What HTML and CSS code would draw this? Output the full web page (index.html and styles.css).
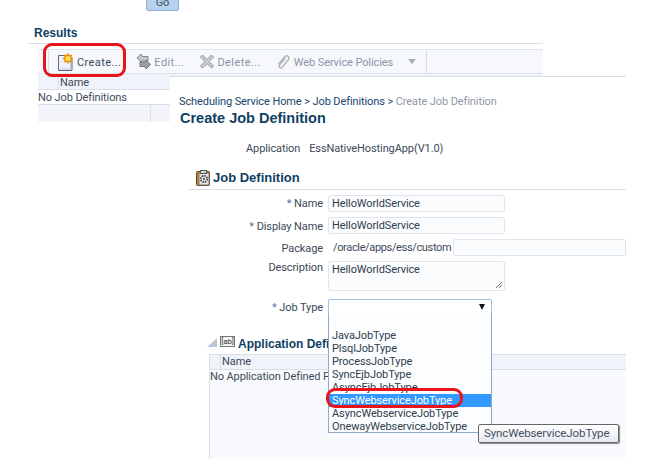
FILE: index.html
```html
<!DOCTYPE html>
<html lang="en">
<head>
    <meta charset="UTF-8">
    <title>Create Job Definition</title>
    <link rel="stylesheet" href="styles.css">
</head>
<body>
    <div class="gorow"><div class="gobtn">Go</div></div>

    <div class="results">
        <h2 class="results-title">Results</h2>
        <div class="toolbar">
            <div class="tool tool-create">
                <svg class="ico" width="16" height="18" viewBox="0 0 16 18">
                    <path d="M.5 2.500h9l4.500 4v11H.5z" fill="#f0f1f9" stroke="#5b6690"/>
                    <path d="M2 16h10.500V8" fill="none" stroke="#c3c8de"/>
                    <path d="M10 0l1.500 2 2.500-.5-.5 2.500 2 1.500-2 1.500.5 2.500-2.500-.5L10 11 8.500 9 6 9.500 6.500 7l-2-1.500L6.500 4 6 1.500l2.500.5z" fill="#f08a12"/>
                    <circle cx="10" cy="5.500" r="2.600" fill="#ffe14a"/>
                </svg>
                <span>Create...</span>
            </div>
            <div class="tool tool-edit">
                <svg class="ico" width="15" height="17" viewBox="0 0 15 17">
                    <path d="M1 5l4-4 1.500 2.500H12V8H5.500L6 10z" fill="#c5c8cc" stroke="#83878d"/>
                    <path d="M14.500 11.500L10 16l-1-2.500H4V9h6V7z" fill="#9da1a6" stroke="#74787e"/>
                </svg>
                <span>Edit...</span>
            </div>
            <div class="tool tool-delete">
                <svg class="ico" width="14" height="15" viewBox="0 0 14 15">
                    <path d="M2.500 1L7 5.500 11.500 1 13.500 3 9 7.500l4.500 4.500-2 2L7 9.500 2.500 14l-2-2L5 7.500.5 3z" fill="#c9ccd0" stroke="#888c92" stroke-width=".9"/>
                </svg>
                <span>Delete...</span>
            </div>
            <div class="tool tool-policies">
                <svg class="ico" width="15" height="16" viewBox="0 0 15 16">
                    <path d="M2.500 10l6.500-7.500c2-2 5 .5 3.500 3l-6.500 8c-1.500 1.500-4-.5-2.500-2.500l6-7" fill="none" stroke="#b3b7bc" stroke-width="1.400"/>
                </svg>
                <span>Web Service Policies</span>
                <i class="tool-arrow"></i>
            </div>
        </div>
        <div class="tbl-head"><span class="tbl-name">Name</span></div>
        <div class="tbl-row">No Job Definitions</div>
        <div class="tbl-foot"></div>
    </div>

    <div class="panel">
        <div class="crumbs">
            <span class="crumb-link">Scheduling Service Home &gt; Job Definitions &gt;</span>
            <span class="crumb-here">Create Job Definition</span>
        </div>
        <h1 class="page-title">Create Job Definition</h1>
        <div class="app-row">
            <span class="app-label">Application</span>
            <span class="app-value">EssNativeHostingApp(V1.0)</span>
        </div>
        <div class="section-head">
            <svg width="14" height="16" viewBox="0 0 14 16">
                <rect x=".5" y="1.500" width="13" height="14" rx="1" fill="#c08030" stroke="#6b4214"/>
                <rect x="3" y="3" width="10" height="12" fill="#e6e6e8" stroke="#777"/>
                <rect x="4.500" y=".5" width="6" height="3" fill="#d4d6da" stroke="#555"/>
                <circle cx="8" cy="9" r="3.200" fill="none" stroke="#333" stroke-width="1.600" stroke-dasharray="1.500 1"/>
                <circle cx="8" cy="9" r="1" fill="#333"/>
            </svg>
            <h2>Job Definition</h2>
        </div>
        <div class="form">
            <label class="lbl"><b>*</b> Name</label>
            <div class="field name-field">HelloWorldService</div>
            <label class="lbl lbl-low"><b>*</b> Display Name</label>
            <div class="field name-field">HelloWorldService</div>
            <label class="lbl lbl-low">Package</label>
            <div class="pkg"><span class="pkg-path">/oracle/apps/ess/custom</span><div class="field pkg-field"></div></div>
            <label class="lbl lbl-top">Description</label>
            <div class="field desc-field">HelloWorldService
                <svg class="grip" width="8" height="8" viewBox="0 0 8 8"><path d="M1 7l6-6M4 7l3-3" stroke="#777" fill="none"/></svg>
            </div>
            <label class="lbl lbl-job"><b>*</b> Job Type</label>
            <div class="field select-field"><i class="select-arrow"></i></div>
        </div>
        <div class="section-head app-defined">
            <i class="disclose"></i>
            <span class="ab-ico">[ab]</span>
            <h2>Application Defined Properties</h2>
        </div>
        <div class="props">
            <div class="props-head"><span class="props-name">Name</span></div>
            <div class="props-body">No Application Defined Properties</div>
        </div>
    </div>

    <ul class="dropdown">
        <li>&nbsp;</li>
        <li>JavaJobType</li>
        <li>PlsqlJobType</li>
        <li>ProcessJobType</li>
        <li>SyncEjbJobType</li>
        <li>AsyncEjbJobType</li>
        <li class="sel">SyncWebserviceJobType</li>
        <li>AsyncWebserviceJobType</li>
        <li>OnewayWebserviceJobType</li>
    </ul>

    <div class="tooltip">SyncWebserviceJobType</div>

    <div class="mark mark-create"></div>
    <div class="mark mark-sync"></div>
</body>
</html>
```

FILE: styles.css
```css
* {margin: 0; padding: 0; box-sizing: border-box;}
body {
    position: relative;
    width: 648px;
    height: 459px;
    overflow: hidden;
    background: #fff;
    font-family: Roboto, "Liberation Sans", Arial, sans-serif;
    font-size: 11px;
    letter-spacing: -.1px;
    color: #3c4a58;
}
h1, h2 {font-family: "Liberation Sans", Arial, sans-serif; letter-spacing: 0;}
.gorow {
    height: 11px;
    padding-left: 146px;
}
.gobtn {
    width: 33px;
    height: 11px;
    line-height: 5px;
    text-align: center;
    overflow: hidden;
    color: #44586c;
    background: #b7d2ef;
    border: 1px solid #8daed0;
    border-top: 0;
    border-radius: 0 0 3px 3px;
}

/* results table behind the pasted panel */
.results {
    padding: 15px 105px 0 28px;
}
.results-title {
    height: 18px;
    padding-left: 6px;
    font-size: 12px;
    line-height: 14px;
    color: #0f3f63;
    border-bottom: 1px solid #d9dfe8;
}
.toolbar {
    display: flex;
    align-items: center;
    height: 25px;
    margin: 5px 0 0 10px;
    padding-left: 10px;
    color: #8a94a8;
    background: #f7f8fc;
    border-top: 1px solid #dde3ec;
    border-bottom: 1px solid #dde3ec;
}
.tool {
    display: flex;
    align-items: center;
    gap: 3px;
}
.tool span {padding-top: 1px;}
.tool-create span, .tool-edit span, .tool-delete span {letter-spacing: .4px;}
.tool-create {
    height: 23px;
    padding-left: 9px;
    color: #3c4a58;
    border-left: 1px solid #d5dce6;
}
.tool-edit {margin-left: 15px;}
.tool-delete {margin-left: 16px;}
.tool-policies {
    margin-left: 15px;
    height: 23px;
    padding-right: 10px;
    border-right: 1px solid #d5dce6;
}
.tool-arrow {
    width: 0;
    height: 0;
    margin-left: 12px;
    border-left: 4px solid transparent;
    border-right: 4px solid transparent;
    border-top: 5px solid #a8adb4;
}
.tbl-head {
    height: 16px;
    margin-left: 10px;
    padding-left: 20px;
    line-height: 15px;
    background: #f0f3fa;
    border-bottom: 1px solid #d9dfe8;
}
.tbl-name {
    display: block;
    height: 15px;
    padding: 1px 0 0 1px;
    border-left: 1px solid #d9dfe8;
}
.tbl-row {
    height: 15px;
    margin-left: 10px;
    padding-top: 1px;
    line-height: 13px;
    border-bottom: 1px solid #d9dfe8;
}
.tbl-foot {
    height: 17px;
    margin-left: 10px;
    background: linear-gradient(to right, #f3f5fb 112px, #dde3ec 112px, #dde3ec 113px, #f3f5fb 113px);
}

/* pasted create job definition panel */
.panel {
    position: absolute;
    left: 170px;
    top: 76px;
    width: 456px;
    height: 383px;
    overflow: hidden;
    padding: 18px 0 0 9px;
    background: #fff;
    border-top: 1px solid #d9dfe8;
}
.crumbs {
    height: 14px;
    line-height: 13px;
}
.crumb-link {color: #17456e;}
.crumb-here {color: #8e98a6;}
.page-title {
    margin-left: 1px;
    font-size: 14.500px;
    line-height: 18px;
    color: #0f3f63;
}
.app-row {
    display: flex;
    gap: 9px;
    margin: 15px 0 0 67px;
    line-height: 14px;
}
.section-head {
    display: flex;
    align-items: center;
    gap: 3px;
    height: 23px;
    margin: 11px 0 0 10px;
    padding: 0 0 1px 7px;
    color: #0f3f63;
    border-bottom: 1px solid #d9dfe8;
}
.section-head h2 {font-size: 13px;}
.form {
    display: grid;
    grid-template-columns: 144px auto;
    column-gap: 5px;
    row-gap: 5px;
    align-items: center;
    margin-top: 5px;
}
.lbl {text-align: right;}
.lbl b {color: #5577a0; font-weight: normal;}
.lbl-low {padding-top: 1px;}
.lbl-top {align-self: start;}
.lbl-job {padding-bottom: 1px;}
.field {
    height: 17px;
    padding-left: 3px;
    line-height: 16px;
    color: #2f3d4c;
    background: #fbfcfe;
    border: 1px solid #dfe5ee;
    border-radius: 2px;
}
.name-field {width: 177px;}
.pkg {
    display: flex;
    align-items: center;
    gap: 3px;
    padding-left: 5px;
    white-space: nowrap;
}
.pkg-path {
    width: 117px;
    letter-spacing: -.35px;
}
.pkg-field {flex: 1;}
.desc-field {
    position: relative;
    width: 177px;
    height: 30px;
    margin-bottom: 3px;
}
.grip {
    position: absolute;
    right: 1px;
    bottom: 1px;
}
.select-field {
    position: relative;
    width: 164px;
    border: 1px solid #9cc2ea;
    background: #fff;
}
.select-arrow {
    position: absolute;
    right: 6px;
    top: 4px;
    width: 0;
    height: 0;
    border-left: 3.500px solid transparent;
    border-right: 3.500px solid transparent;
    border-top: 6px solid #111;
}
.app-defined {
    height: 17px;
    margin: 19px 0 0 28px;
    padding: 0;
    border-bottom: 0;
}
.app-defined h2 {font-size: 12px;}
.disclose {
    width: 0;
    height: 0;
    margin-top: -3px;
    border-left: 10px solid transparent;
    border-bottom: 9px solid #b9c7d8;
}
.ab-ico {
    width: 15px;
    height: 11px;
    margin-top: -4px;
    font-size: 8px;
    line-height: 9px;
    text-align: center;
    color: #333;
    background: #f4f4f4;
    border: 1px solid #777;
}
.props {
    height: 107px;
    margin: 2px 0 0 30px;
    background: #f9fafd;
    border-left: 1px solid #d9dfe8;
}
.props-head {
    height: 16px;
    padding-left: 10px;
    line-height: 13px;
    background: #f0f3fa;
    border-top: 1px solid #d9dfe8;
    border-bottom: 1px solid #d9dfe8;
}
.props-name {
    display: block;
    height: 14px;
    padding-left: 1px;
    border-left: 1px solid #d9dfe8;
}
.props-body {
    line-height: 14px;
    white-space: nowrap;
}

/* open list, tooltip and the red notes lie over the panel */
.dropdown {
    position: absolute;
    left: 328px;
    top: 314px;
    width: 164px;
    height: 119px;
    padding: 2px 0 0 3px;
    list-style: none;
    line-height: 13px;
    color: #2f3d4c;
    background: #fbfdff;
    border: 1px solid #8fa9c6;
    border-top: 0;
}
.dropdown .sel {
    margin-left: -3px;
    padding-left: 3px;
    color: #fff;
    background: #3399ff;
}
.tooltip {
    position: absolute;
    left: 478px;
    top: 424px;
    width: 141px;
    height: 19px;
    padding-left: 5px;
    font-size: 11.500px;
    line-height: 17px;
    color: #44505c;
    background: linear-gradient(#fff, #e6e8f0);
    border: 1px solid #666;
    border-radius: 2px;
    box-shadow: 1px 1px 1px #888;
}
.mark {
    position: absolute;
    border: 3px solid #e8141c;
    border-radius: 9px;
}
.mark-create {
    left: 43px;
    top: 43px;
    width: 83px;
    height: 34px;
}
.mark-sync {
    left: 326px;
    top: 388px;
    width: 137px;
    height: 20px;
}
```
